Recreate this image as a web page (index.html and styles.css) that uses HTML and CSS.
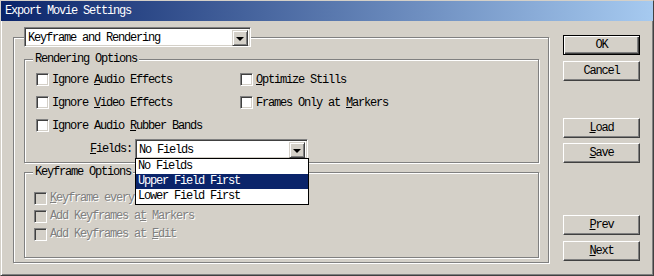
FILE: index.html
```html
<!DOCTYPE html>
<html lang="en">
<head>
    <meta charset="UTF-8">
    <title>Export Movie Settings</title>
    <link rel="stylesheet" href="styles.css">
</head>
<body>
    <div class="window">
        <div class="titlebar">Export Movie Settings</div>
        <div class="client">
            <fieldset class="group outer">
                <legend class="select-legend">
                    <div class="select wide">
                        <span class="select-value">Keyframe and Rendering</span>
                        <span class="drop-btn"></span>
                    </div>
                </legend>

                <fieldset class="group rendering">
                    <legend>Rendering Options</legend>
                    <div class="check-grid">
                        <label class="check"><span class="box"></span><span>Ignore <u>A</u>udio Effects</span></label>
                        <label class="check"><span class="box"></span><span><u>O</u>ptimize Stills</span></label>
                        <label class="check"><span class="box"></span><span>Ignore <u>V</u>ideo Effects</span></label>
                        <label class="check"><span class="box"></span><span>Frames Only at <u>M</u>arkers</span></label>
                        <label class="check"><span class="box"></span><span>Ignore Audio <u>R</u>ubber Bands</span></label>
                    </div>
                    <div class="fields-row">
                        <span class="fields-label"><u>F</u>ields:</span>
                        <div class="select-wrap">
                            <div class="select narrow">
                                <span class="select-value">No Fields</span>
                                <span class="drop-btn"></span>
                            </div>
                            <ul class="dropdown-list">
                                <li>No Fields</li>
                                <li class="selected">Upper Field First</li>
                                <li>Lower Field First</li>
                            </ul>
                        </div>
                    </div>
                </fieldset>

                <fieldset class="group keyframe">
                    <legend>Keyframe Options</legend>
                    <div class="check-list">
                        <label class="check disabled"><span class="box"></span><span><u>K</u>eyframe every</span></label>
                        <label class="check disabled"><span class="box"></span><span>Add Keyframes a<u>t</u> Markers</span></label>
                        <label class="check disabled"><span class="box"></span><span>Add Keyframes at <u>E</u>dit</span></label>
                    </div>
                </fieldset>
            </fieldset>

            <div class="buttons">
                <div class="btn default ok">OK</div>
                <div class="btn cancel">Cancel</div>
                <div class="btn load"><u>L</u>oad</div>
                <div class="btn save"><u>S</u>ave</div>
                <div class="btn prev"><u>P</u>rev</div>
                <div class="btn next"><u>N</u>ext</div>
            </div>
        </div>
    </div>
</body>
</html>
```
FILE: styles.css
```css
body {
    margin: 0;
    background-color: #d4d0c8;
    color: #000;
    font-family: "Liberation Mono", "DejaVu Sans Mono", monospace;
    font-size: 12px;
    letter-spacing: -1.2px;
}
.window {
    width: 654px;
    height: 276px;
    box-sizing: border-box;
    border: 1px solid;
    border-color: #d4d0c8 #404040 #404040 #d4d0c8;
    box-shadow: inset 1px 1px #fff, inset -1px -1px #808080;
}
.titlebar {
    height: 20px;
    line-height: 20px;
    padding-left: 4px;
    background: linear-gradient(to right, #0a246a, #a6caf0);
    color: #fff;
}
.client {
    display: flex;
    gap: 14px;
    padding: 6px 0 0 12px;
}

/* etched group boxes */
.group {
    margin: 0;
    padding: 0;
    min-width: 0;
    border: 1px solid #808080;
    box-shadow: inset 1px 1px #fff, 1px 1px #fff;
}
.group legend {
    margin-left: 8px;
    padding: 0 2px;
    line-height: 13px;
    background-color: #d4d0c8;
}
.outer {
    width: 536px;
    box-sizing: border-box;
    padding: 0 9px 4px 10px;
}
.outer > .select-legend {
    margin-left: 0;
    padding: 0;
    line-height: normal;
}
.rendering {
    margin-top: 6px;
    padding-bottom: 3px;
}
.keyframe {
    margin-top: 3px;
    padding-bottom: 14px;
}

/* checkboxes */
.check-grid {
    display: grid;
    grid-template-columns: 204px auto;
    grid-auto-rows: 23px;
    padding: 2px 0 0 11px;
}
.check-list {
    display: grid;
    grid-auto-rows: 18px;
    padding: 10px 0 0 9px;
}
.check {
    display: flex;
    align-items: center;
    gap: 3px;
    white-space: pre;
}
.box {
    width: 13px;
    height: 13px;
    box-sizing: border-box;
    border: 1px solid;
    border-color: #808080 #fff #fff #808080;
    box-shadow: inset 1px 1px #404040, inset -1px -1px #d4d0c8;
    background-color: #fff;
}
.check.disabled {
    color: #808080;
    text-shadow: 1px 1px #fff;
}
.check.disabled .box {
    background-color: #d4d0c8;
}

/* combo boxes */
.select {
    display: flex;
    height: 20px;
    box-sizing: border-box;
    padding: 2px;
    border: 1px solid;
    border-color: #808080 #fff #fff #808080;
    box-shadow: inset 1px 1px #404040, inset -1px -1px #d4d0c8;
    background-color: #fff;
}
.select.wide {
    width: 227px;
}
.select.narrow {
    width: 173px;
}
.select-value {
    flex: 1;
    line-height: 16px;
    padding-left: 1px;
}
.drop-btn {
    width: 16px;
    height: 16px;
    box-sizing: border-box;
    border: 1px solid;
    border-color: #d4d0c8 #404040 #404040 #d4d0c8;
    box-shadow: inset 1px 1px #fff, inset -1px -1px #808080;
    background-color: #d4d0c8;
    display: flex;
    justify-content: center;
    align-items: center;
}
.drop-btn::after {
    content: "";
    border-left: 4px solid transparent;
    border-right: 4px solid transparent;
    border-top: 4px solid #000;
    margin-top: 1px;
}
.fields-row {
    display: flex;
    margin-top: 2px;
    padding-left: 65px;
}
.fields-label {
    line-height: 20px;
    margin-right: 3px;
}
.select-wrap {
    position: relative;
}
.dropdown-list {
    position: absolute;
    top: 19px;
    left: 0;
    width: 174px;
    box-sizing: border-box;
    margin: 0;
    padding: 0;
    list-style: none;
    border: 1px solid #000;
    background-color: #fff;
    z-index: 2;
}
.dropdown-list li {
    height: 15px;
    line-height: 15px;
    padding-left: 2px;
}
.dropdown-list li.selected {
    background-color: #0a246a;
    color: #fff;
}

/* push buttons */
.buttons {
    display: flex;
    flex-direction: column;
}
.btn {
    width: 77px;
    height: 20px;
    box-sizing: border-box;
    border: 1px solid;
    border-color: #fff #404040 #404040 #fff;
    box-shadow: inset -1px -1px #808080;
    text-align: center;
    line-height: 18px;
}
.btn.default {
    border-color: #000;
    box-shadow: inset 1px 1px #fff, inset -1px -1px #404040, inset -2px -2px #808080;
}
.ok { margin-top: 8px; }
.cancel { margin-top: 6px; }
.load { margin-top: 37px; }
.save { margin-top: 5px; }
.prev { margin-top: 52px; }
.next { margin-top: 6px; }
```
